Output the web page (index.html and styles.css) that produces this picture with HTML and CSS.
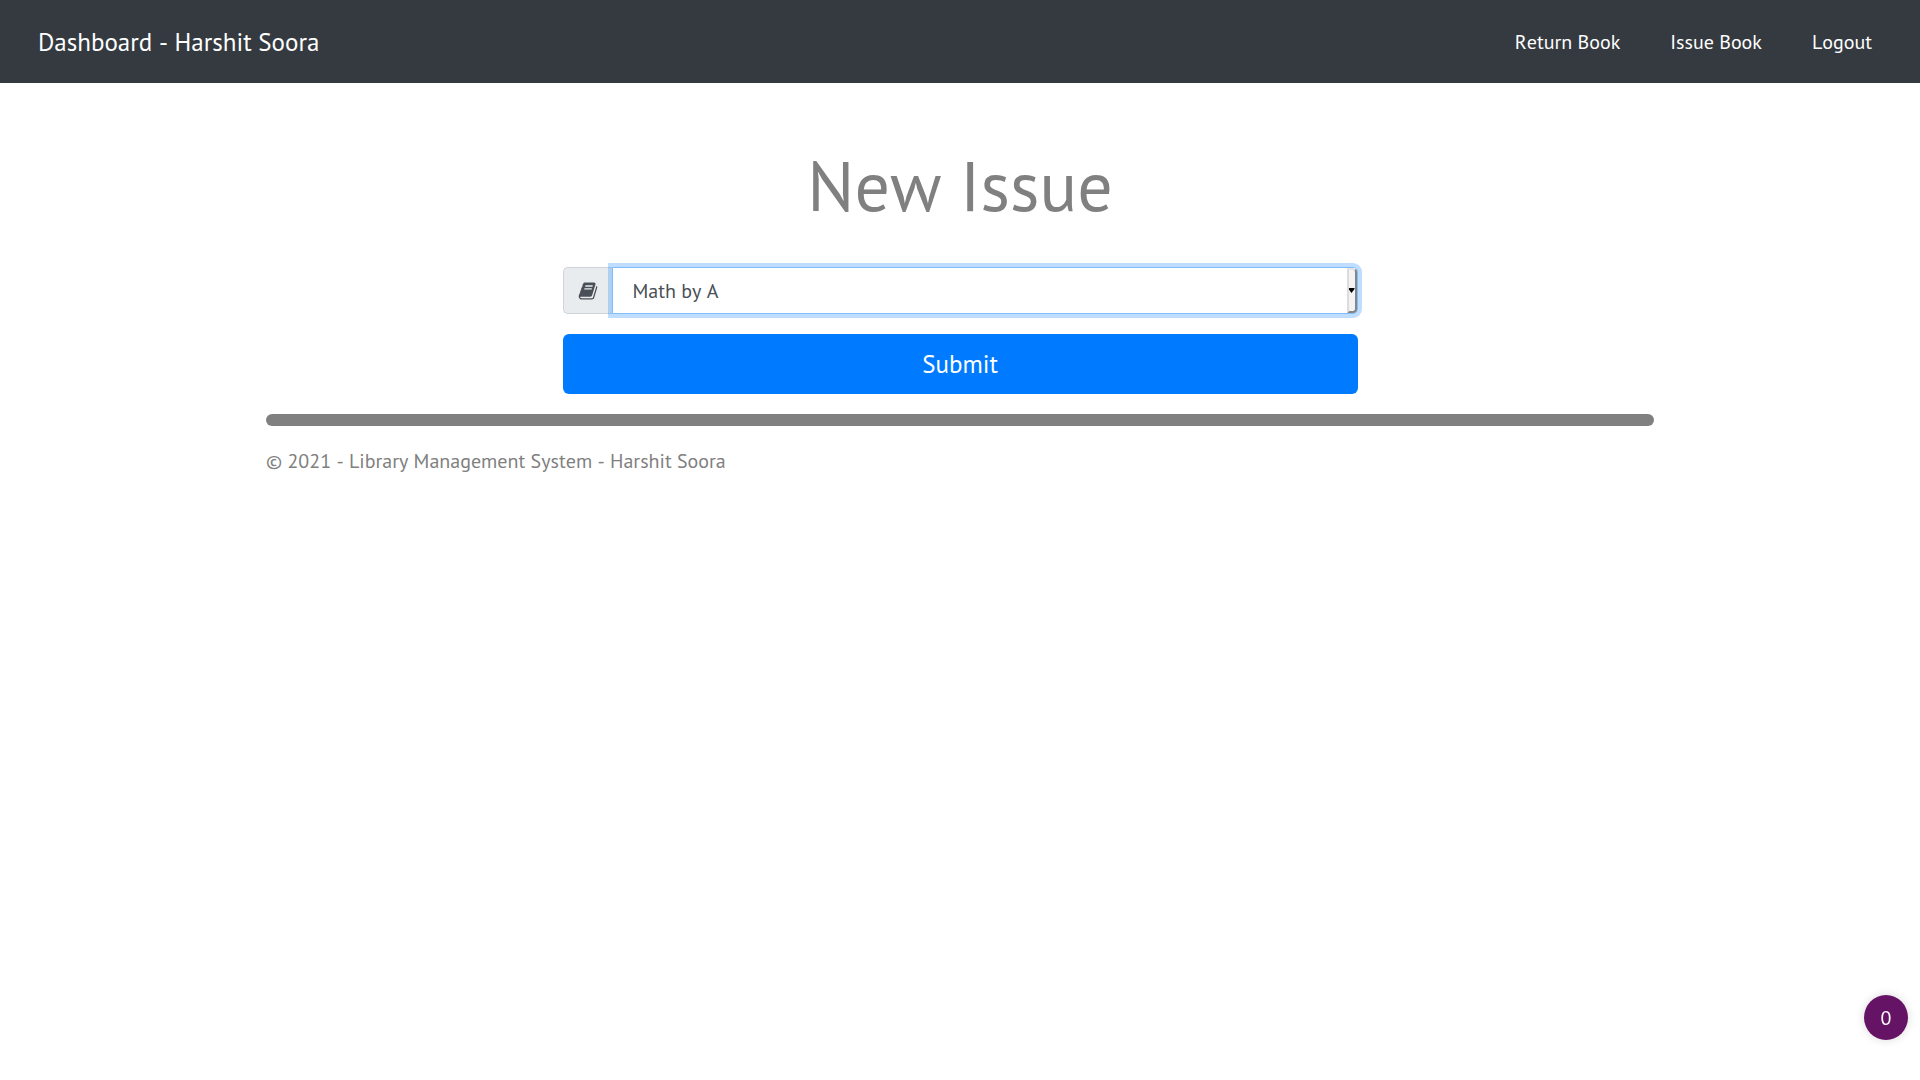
FILE: index.html
```html
<!DOCTYPE html>
<html lang="en">
<head>
<meta charset="utf-8">
<meta name="viewport" content="width=device-width, initial-scale=1">
<title>New Issue</title>
<link rel="stylesheet" href="styles.css">
</head>
<body>
<nav class="navbar">
  <a class="brand" href="#">Dashboard - Harshit Soora</a>
  <div class="nav-links">
    <a href="#">Return Book</a>
    <a href="#">Issue Book</a>
    <a href="#">Logout</a>
  </div>
</nav>
<main class="container">
  <h1 class="title">New Issue</h1>
  <form class="issue-form">
    <div class="input-group">
      <label class="addon" for="book" aria-label="Book">
        <svg width="20" height="20" viewBox="0 0 1664 1792" aria-hidden="true"><path fill="currentColor" d="M1639 478q40 57 18 129l-275 906q-19 64-76.500 107.500t-122.500 43.500h-923q-77 0-148.500-53.500t-99.500-131.500q-24-67-2-127 0-4 3-27t4-37q1-8-3-21.500t-3-19.500q2-11 8-21t16.500-23.500 16.500-23.500q23-38 45-91.500t30-91.500q3-10 .5-30t-.5-28q3-11 17-28t17-23q21-36 42-92t25-90q1-9-2.500-32t.5-28q4-13 22-30.500t22-22.500q19-26 42.500-84.500t27.500-96.500q1-8-3-25.500t-2-26.500q2-8 9-18t18-23 17-21q8-12 16.500-30.500t15-35 16-36 19.500-32 26.500-23.500 36-11.500 47.500 5.500l-1 3q38-9 51-9h761q74 0 114 56t18 130l-274 906q-36 119-71.500 153.500t-128.500 34.500h-869q-27 0-38 15-11 16-1 43 24 70 144 70h923q29 0 56-15.500t35-41.500l300-987q7-22 5-57 38 15 59 43zm-1064 2q-4 13 2 22.500t20 9.500h608q13 0 25.500-9.500t16.500-22.500l21-64q4-13-2-22.500t-20-9.500h-608q-13 0-25.500 9.500t-16.500 22.500zm-83 256q-4 13 2 22.500t20 9.500h608q13 0 25.500-9.500t16.500-22.500l21-64q4-13-2-22.500t-20-9.500h-608q-13 0-25.500 9.500t-16.500 22.500z"/></svg>
      </label>
      <div class="select-wrap">
        <select id="book"><option>Math by A</option></select>
        <span class="select-arrow"></span>
      </div>
    </div>
    <button class="submit" type="button">Submit</button>
  </form>
  <hr class="divider">
  <footer class="footer">© 2021 - Library Management System - Harshit Soora</footer>
</main>
<button class="counter" type="button">0</button>
</body>
</html>
```
FILE: styles.css
```css
* { box-sizing: border-box; }

body {
  margin: 0;
  background: #fff;
  color: gray;
  font-family: "PT Sans", "Noto Sans", sans-serif;
  font-size: 20px;
  font-kerning: none;
  line-height: 30px;
}

.navbar {
  display: flex;
  flex-wrap: wrap;
  align-items: center;
  justify-content: space-between;
  min-height: 83px;
  padding: 10px 48px 10px 38px;
  background: #343a40;
}

.navbar a { color: #fff; text-decoration: none; }
.brand { font-size: 25px; }
.nav-links { display: flex; gap: 50px; }

.container {
  max-width: 1428px;
  margin: 0 auto;
  padding: 60px 20px;
}

.title {
  margin: 0 0 40px;
  font-size: 70px;
  font-weight: 400;
  line-height: 84px;
  text-align: center;
}

.issue-form {
  display: grid;
  gap: 20px;
  max-width: 795px;
  margin: 0 auto;
}

.input-group { display: flex; height: 47px; }

.addon {
  display: flex;
  align-items: center;
  justify-content: center;
  width: 49px;
  border: 1px solid #ced4da;
  border-right: 0;
  border-radius: 5px 0 0 5px;
  background: #e9ecef;
  color: #495057;
}

.select-wrap { position: relative; flex: 1; }

.select-wrap select {
  width: 100%;
  height: 100%;
  padding: 0 20px;
  appearance: none;
  border: 1px solid #80bdff;
  border-radius: 0 5px 5px 0;
  outline: 0;
  background: #fff;
  box-shadow: 0 0 0 4px rgba(0, 123, 255, .25);
  color: #495057;
  font: inherit;
}

.select-arrow {
  position: absolute;
  top: 1px;
  right: 1px;
  bottom: 1px;
  display: grid;
  place-items: center;
  width: 10px;
  border: 2px solid;
  border-color: #e3e3e3 #858585 #858585 #dcdcdc;
  border-radius: 0 4px 4px 0;
  background: #f4f2f2;
  pointer-events: none;
}

.select-arrow::before {
  content: "";
  width: 6px;
  height: 5px;
  background: #000;
  clip-path: polygon(0 0, 100% 0, 100% 20%, 50% 100%, 0 20%);
}

.submit {
  height: 60px;
  border: 0;
  border-radius: 6px;
  background: #007bff;
  color: #fff;
  font: inherit;
  font-size: 25px;
}

.divider {
  height: 12px;
  margin: 20px 0;
  border: 0;
  border-radius: 6px;
  background: gray;
}

.counter {
  position: fixed;
  right: 12px;
  bottom: 40px;
  width: 44px;
  height: 45px;
  padding: 0;
  border: 0;
  border-radius: 50%;
  background: #651365;
  box-shadow: 0 0 10px rgba(0, 0, 0, .15);
  color: #fff;
  font: inherit;
}
```
